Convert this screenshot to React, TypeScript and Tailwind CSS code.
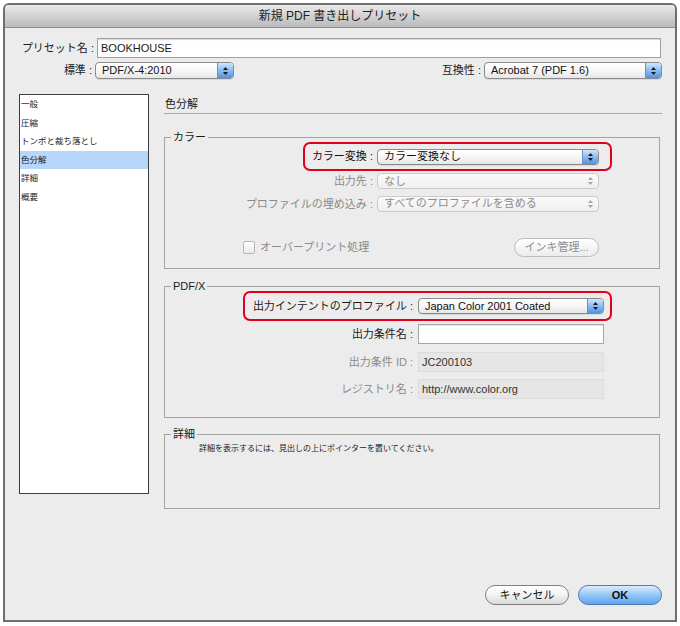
import type { ReactNode } from "react"

function Arrows({ dim }: { dim?: boolean }) {
  return (
    <svg width="7" height="10" viewBox="0 0 7 10" className="block">
      <path d="M3.5 1 L6 4 L1 4 Z" fill={dim ? "#a5a5a5" : "#1a1a1a"} />
      <path d="M1 6 L6 6 L3.5 9 Z" fill={dim ? "#a5a5a5" : "#1a1a1a"} />
    </svg>
  )
}

function Popup({ value, className, disabled }: { value: string; className: string; disabled?: boolean }) {
  if (disabled) {
    return (
      <div
        className={`flex items-center rounded-[4px] border border-[#cbcbcb] bg-gradient-to-b from-[#fbfbfb] to-[#efefef] text-[#8c8c8c] ${className}`}
      >
        <span className="flex-1 truncate pl-[6px] leading-none">{value}</span>
        <span className="flex h-full w-[16px] items-center justify-center">
          <Arrows dim />
        </span>
      </div>
    )
  }
  return (
    <div
      className={`flex items-center rounded-[4px] border border-[#8a8a8a] bg-gradient-to-b from-white via-[#f7f7f7] to-[#e6e6e6] text-[#111] shadow-[0_1px_0_rgba(0,0,0,0.08)] ${className}`}
    >
      <span className="flex-1 truncate pl-[6px] leading-none">{value}</span>
      <span className="flex h-full w-[16px] items-center justify-center rounded-r-[3px] border-l border-[#6f8fbd] bg-gradient-to-b from-[#d3e6fb] via-[#8bbcf1] to-[#4f93e4]">
        <Arrows />
      </span>
    </div>
  )
}

function Group({ title, className, children }: { title: string; className: string; children: ReactNode }) {
  return (
    <fieldset className={`w-[496px] border border-[#a3a3a3] ${className}`}>
      <legend className="ml-[6px] px-[2px] text-[11px] leading-[10px] text-[#1a1a1a]">{title}</legend>
      {children}
    </fieldset>
  )
}

const sections = ["一般", "圧縮", "トンボと裁ち落とし", "色分解", "詳細", "概要"]

export default function App() {
  return (
    <div className="h-[626px] w-[680px] bg-white px-[3px] pt-[3px] font-['Liberation_Sans','Noto_Sans_CJK_JP',sans-serif] text-[11px] text-[#1a1a1a]">
      <div className="flex h-[619px] w-[674px] flex-col rounded-t-[6px] border-2 border-[#6f6f6f] bg-[#ececec]">
        {/* title bar */}
        <div className="flex h-[23px] items-center justify-center rounded-t-[4px] border-b border-[#8e8e8e] bg-gradient-to-b from-[#eaeaea] to-[#bababa] text-[12px] text-[#222]">
          新規 PDF 書き出しプリセット
        </div>

        {/* preset name */}
        <div className="mt-[10px] flex items-center">
          <div className="w-[92px] pr-[3px] text-right">プリセット名 :</div>
          <div className="flex h-[20px] w-[564px] items-center border border-[#a0a0a0] bg-white pl-[3px] shadow-[inset_0_1px_1px_rgba(0,0,0,0.15)]">
            BOOKHOUSE
          </div>
        </div>

        {/* standard / compatibility */}
        <div className="mt-[4px] flex items-center pr-[13px]">
          <div className="w-[90px] pr-[3px] text-right">標準 :</div>
          <Popup value="PDF/X-4:2010" className="h-[17px] w-[139px]" />
          <div className="flex-1 pr-[3px] text-right">互換性 :</div>
          <Popup value="Acrobat 7 (PDF 1.6)" className="h-[17px] w-[178px]" />
        </div>

        <div className="mt-[15px] flex items-start">
          {/* section list */}
          <div className="ml-[14px] h-[400px] w-[130px] border border-[#3c3c3c] bg-white">
            {sections.map((s, i) => (
              <div
                key={s}
                className={`h-[18.5px] pl-[1px] text-[8.5px] leading-[18.5px] ${i === 3 ? "bg-[#b7d6fc]" : ""}`}
              >
                {s}
              </div>
            ))}
          </div>

          {/* right panel */}
          <div className="ml-[15px] w-[498px]">
            <div className="h-[20px] border-b border-[#a8a8a8] pl-[1px] pt-[3px] leading-[14px]">色分解</div>

            <Group title="カラー" className="mt-[18px] pb-[11px]">
              <div className="ml-[138px] flex h-[29px] w-[309px] items-center justify-end rounded-[7px] border-2 border-[#e2001a] pr-[11px]">
                <span className="text-[#111]">カラー変換 :</span>
                <Popup value="カラー変換なし" className="ml-[4px] h-[16px] w-[222px]" />
              </div>
              <div className="mt-[2px] flex items-center">
                <div className="w-[208px] text-right text-[#8a8a8a]">出力先 :</div>
                <Popup value="なし" disabled className="ml-[4px] h-[16px] w-[222px]" />
              </div>
              <div className="mt-[6px] flex items-center">
                <div className="w-[208px] text-right text-[#8a8a8a]">プロファイルの埋め込み :</div>
                <Popup value="すべてのプロファイルを含める" disabled className="ml-[4px] h-[16px] w-[222px]" />
              </div>
              <div className="mt-[26px] flex items-center">
                <div className="ml-[78px] h-[13px] w-[12px] rounded-[2px] border border-[#b8b8b8] bg-gradient-to-b from-white to-[#e8e8e8]" />
                <span className="ml-[5px] text-[#8a8a8a]">オーバープリント処理</span>
                <div className="ml-auto mr-[60px] flex h-[19px] w-[85px] items-center justify-center rounded-full border border-[#bdbdbd] bg-gradient-to-b from-white to-[#ececec] text-[#8d8d8d]">
                  インキ管理...
                </div>
              </div>
            </Group>

            <Group title="PDF/X" className="mt-[12px] pb-[18px]">
              <div className="ml-[78px] flex h-[30px] w-[369px] items-center justify-end rounded-[7px] border-2 border-[#e2001a] pr-[6px]">
                <span>出力インテントのプロファイル :</span>
                <Popup value="Japan Color 2001 Coated" className="ml-[5px] h-[16px] w-[186px]" />
              </div>
              <div className="mt-[3px] flex items-center">
                <div className="w-[248px] text-right">出力条件名 :</div>
                <div className="ml-[5px] h-[20px] w-[186px] border border-[#a6a6a6] bg-white shadow-[inset_0_1px_1px_rgba(0,0,0,0.12)]" />
              </div>
              <div className="mt-[8px] flex items-center">
                <div className="w-[248px] text-right text-[#8a8a8a]">出力条件 ID :</div>
                <div className="ml-[5px] flex h-[20px] w-[186px] items-center border border-[#dcdcdc] bg-[#e6e6e6] pl-[3px] text-[#333]">
                  JC200103
                </div>
              </div>
              <div className="mt-[7px] flex items-center">
                <div className="w-[248px] text-right text-[#8a8a8a]">レジストリ名 :</div>
                <div className="ml-[5px] flex h-[20px] w-[186px] items-center border border-[#dcdcdc] bg-[#e6e6e6] pl-[3px] text-[#333]">
                  http://www.color.org
                </div>
              </div>
            </Group>

            <Group title="詳細" className="mt-[11px] h-[80px]">
              <div className="ml-[34px] mt-[5px] text-[8px] leading-[10px]">
                詳細を表示するには、見出しの上にポインターを置いてください。
              </div>
            </Group>
          </div>
        </div>

        {/* buttons */}
        <div className="mt-[76px] flex justify-end gap-[9px] pr-[13px]">
          <div className="flex h-[20px] w-[84px] items-center justify-center rounded-full border border-[#7f7f7f] bg-gradient-to-b from-white via-[#f3f3f3] to-[#d9d9d9] text-[#111]">
            キャンセル
          </div>
          <div className="flex h-[20px] w-[84px] items-center justify-center rounded-full border border-[#4e7cb2] bg-gradient-to-b from-[#dcecfd] via-[#94c6f5] to-[#5aa5ee] font-bold text-[#111]">
            OK
          </div>
        </div>
      </div>
    </div>
  )
}
